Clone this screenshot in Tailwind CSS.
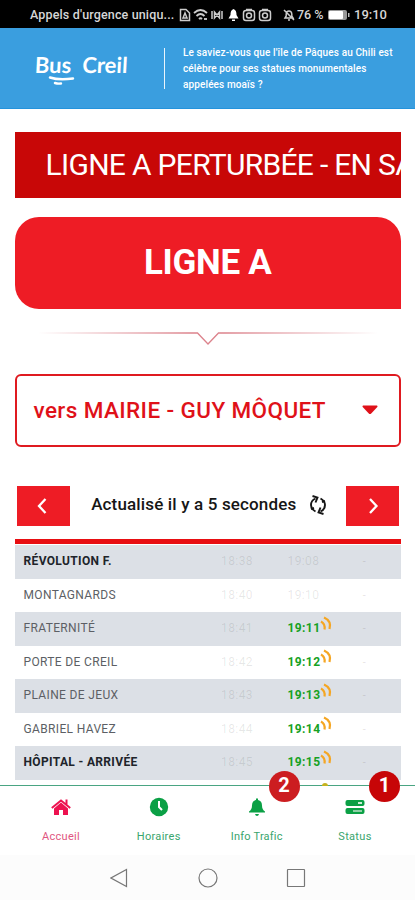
<!DOCTYPE html>
<html lang="fr">
<head>
    <meta charset="UTF-8">
    <meta name="viewport" content="width=device-width, initial-scale=1.0">
    <title>Bus Creil</title>
    <script src="https://cdn.jsdelivr.net/npm/@tailwindcss/browser@4"></script>
</head>
<body class="bg-white font-[Roboto,sans-serif] overflow-hidden">
    <svg class="hidden">
        <symbol id="live" viewBox="0 0 14 16">
            <path d="M1 5.500Q5.500 8 4.500 13.500M4 1.500Q11.800 5 9.500 13" fill="none" stroke="#f5a623" stroke-width="2.200"/>
        </symbol>
        <symbol id="camera" viewBox="0 0 14 14">
            <rect x="1.500" y="2.500" width="11" height="10" rx="2.500" fill="none" stroke="#ccc" stroke-width="1.500"/>
            <path d="M4 1.500h6" stroke="#ccc" stroke-width="1.500"/>
            <circle cx="7" cy="7.500" r="2.500" fill="none" stroke="#ccc" stroke-width="1.500"/>
        </symbol>
    </svg>

    <div class="h-screen flex flex-col">
        <!-- Status bar -->
        <div class="h-7 shrink-0 bg-black text-[#d6d6d6] flex items-center pl-[30px] pt-[2px] text-[12.5px] font-medium whitespace-nowrap">
            <span class="w-[146px] tracking-[0.15px]">Appels d'urgence uniqu...</span>
            <svg class="ml-[3px] w-3 h-[14px]" viewBox="0 0 12 14" fill="none" stroke="#ccc" stroke-width="1.500"><path d="M1.500 1.500h5.500l3.500 3.500v7.500h-9z"/><path d="M4 10l2-5 2 5z"/></svg>
            <svg class="ml-[2px] w-[15px] h-[14px]" viewBox="0 0 15 14" fill="none" stroke="#ccc" stroke-width="1.800"><path d="M1 5Q7.500-1 14 5M3.500 8Q7.500 4 11.500 8M6 11q1.500-1.500 3 0"/><path d="M11 11h3"/></svg>
            <svg class="ml-[2px] w-[14px] h-3" viewBox="0 0 14 12" fill="none" stroke="#ccc" stroke-width="1.500"><path d="M2 2v8M12 2v8M4.500 3v6l5-6v6z"/></svg>
            <svg class="ml-[4px] w-[11px] h-3" viewBox="0 0 11 12" fill="#fff"><path d="M5.500 0C3 1 2.500 3 2.500 6L.5 9.500h10L8.500 6C8.500 3 8 1 5.500 0zM4 10.500h3v1.500H4z"/></svg>
            <svg class="ml-[3px] w-[14px] h-[14px]"><use href="#camera"/></svg>
            <svg class="ml-[2px] w-[14px] h-[14px]"><use href="#camera"/></svg>
            <svg class="ml-[11px] w-3 h-3" viewBox="0 0 12 12" fill="none" stroke="#ccc" stroke-width="1.500"><path d="M2 9h8L8.800 7V5Q8.500 2 6 2T3.200 5v2zM5 11h2M1 1l10 10"/></svg>
            <span class="ml-[2px] w-[31px] text-[12.500px]">76 %</span>
            <svg class="w-[22px] h-3" viewBox="0 0 22 12"><rect x="0" y="1" width="19" height="10" rx="2" fill="#999"/><rect x="1" y="2" width="14" height="8" rx="1" fill="#fff"/><path d="M20 4h1.500v4H20z" fill="#bbb"/></svg>
            <span class="ml-[4px] text-[13px]">19:10</span>
        </div>

        <!-- Header -->
        <header class="h-[81px] shrink-0 bg-[#3a9edf] border-b border-[#2493dc] flex text-white">
            <div class="w-[164px] pl-[35px] pt-[23px] font-[Lato,sans-serif] relative">
                <p class="text-[22px] leading-7 font-bold whitespace-nowrap -skew-x-3"><span>Bus</span><span class="ml-[11px]">Creil</span></p>
                <svg class="absolute left-12 top-[48px] w-7 h-3" viewBox="0 0 28 12" fill="none" stroke="#fff" stroke-width="2.400" stroke-linecap="round"><path d="M2 1.500q9 3 23 1M7 7q3 1 6 .5"/></svg>
            </div>
            <div class="w-px h-[41px] mt-5 bg-white/90"></div>
            <p class="pl-[18px] pt-[17px] text-[10px] leading-[15.8px] font-medium tracking-[0.12px] whitespace-nowrap">Le saviez-vous que l'île de Pâques au Chili est<br>célèbre pour ses statues monumentales<br>appelées moaïs ?</p>
        </header>

        <!-- Line -->
        <main class="flex-1 min-h-0 overflow-hidden pl-[14.5px] pr-[14px] pt-[23px]">
            <div class="h-[66px] bg-[#c80707] text-white text-[30px] tracking-[-0.7px] whitespace-nowrap overflow-hidden flex items-center pl-[31px] pb-px">
                <span>LIGNE A PERTURBÉE - EN SA</span>
            </div>
            <div class="mt-[19px] h-[92px] rounded-[24px] rounded-br-none bg-[#ee1c25] text-white text-[35px] tracking-[-0.3px] font-bold flex items-center justify-center">LIGNE A</div>
            <svg class="block mx-auto mt-[22px] w-[340px] h-4" viewBox="0 0 340 16">
                <defs>
                    <linearGradient id="fade" gradientUnits="userSpaceOnUse" x1="0" y1="0" x2="340" y2="0">
                        <stop offset="0" stop-color="#c9404e" stop-opacity="0"/>
                        <stop offset=".45" stop-color="#c9404e" stop-opacity=".65"/>
                        <stop offset=".55" stop-color="#c9404e" stop-opacity=".65"/>
                        <stop offset="1" stop-color="#c9404e" stop-opacity="0"/>
                    </linearGradient>
                </defs>
                <path d="M0 2h159.500l10.500 11 10.500-11H340" fill="none" stroke="url(#fade)" stroke-width="1.300"/>
            </svg>

            <div class="mt-[27px] h-[73px] border-2 border-[#df1a20] rounded-md text-[#df1119] text-[22.500px] tracking-[0.4px] font-medium flex items-center justify-between pl-[17px] pr-[21px]">
                <span class="whitespace-nowrap">vers MAIRIE - GUY MÔQUET</span>
                <svg class="w-4 h-[10px] -mt-[2px]" viewBox="0 0 16 10" fill="#df1119"><path d="M1 .5h14q1 .5.300 1.500L9.200 8.500q-1.200 1-2.400 0L.7 2Q0 1 1 .5z"/></svg>
            </div>

            <div class="mt-[39px] h-10 flex justify-between items-center px-[2px] text-[#161616]">
                <div class="w-[53px] h-10 bg-[#ee1c25] flex items-center justify-center">
                    <svg class="w-3 h-4 -ml-[3px]" viewBox="0 0 12 16" fill="none" stroke="#fff" stroke-width="2.300"><path d="M9.500 1L3 8l6.500 7"/></svg>
                </div>
                <div class="flex items-center whitespace-nowrap pb-[3px] pl-[4px]">
                    <span class="text-[17px] font-medium tracking-[0.15px]">Actualisé il y a 5 secondes</span>
                    <svg class="ml-[12px] w-5 h-[22px]" viewBox="0 0 20 22" fill="none" stroke="currentColor" stroke-width="1.900">
                        <path d="M7.500 17.500Q3 15 3 11q0-4.500 4.500-6.500M12.500 4.500Q17 7 17 11q0 4.500-4.500 6.500"/>
                        <path d="M4.500 2l5 1.500-2 5M15.500 20l-5-1.500 2-5M14 8l3-1M6 14l-3 1"/>
                    </svg>
                </div>
                <div class="w-[53px] h-10 bg-[#ee1c25] flex items-center justify-center">
                    <svg class="w-3 h-4" viewBox="0 0 12 16" fill="none" stroke="#fff" stroke-width="2.300"><path d="M3 1l6.500 7L3 15"/></svg>
                </div>
            </div>

            <!-- Timetable -->
            <div id="stops" class="mt-[13px] border-t-[5px] border-[#e80e12] pt-px text-[12px]"></div>
        </main>

        <!-- Tabs -->
        <nav class="relative z-10 h-[70px] shrink-0 border-t border-[#4aa582] bg-white grid grid-cols-[112px_1fr_1fr_112px] text-[11px] text-[#3aa56d] pt-[11px]">
            <div class="flex flex-col items-center pl-[10px] gap-[13px] text-[#df5581]">
                <svg class="w-5 h-5" viewBox="0 0 20 20" fill="#ed1250"><path d="M10 5.500l7 6V18h-5v-5H8v5H3v-6.500z"/><path d="M.8 11L10 3.500l9.200 7.500M15.500 2.500V8" fill="none" stroke="#ed1250" stroke-width="2"/></svg>
                <span class="leading-[14px] tracking-[0.3px]">Accueil</span>
            </div>
            <div class="flex flex-col items-center gap-[13px] pr-[2px]">
                <svg class="w-5 h-5" viewBox="0 0 20 20"><circle cx="10" cy="10" r="9.200" fill="#0ba045"/><path d="M10 4v6l3 3" fill="none" stroke="#fff" stroke-width="2"/></svg>
                <span class="leading-[14px] tracking-[0.3px]">Horaires</span>
            </div>
            <div class="relative flex flex-col items-center gap-[13px] pl-[3px]">
                <svg class="w-5 h-5" viewBox="0 0 20 20" fill="#0ba045"><path d="M9 1.500h2v1.400q4 .8 4 5.600 0 4 3 6v1H2v-1q3-2 3-6 0-4.800 4-5.600zM8 17h4q-.5 2-2 2t-2-2z"/></svg>
                <span class="leading-[14px] tracking-[0.2px]">Info Trafic</span>
                <span class="absolute left-[61px] -top-[26px] size-[31px] rounded-full bg-[#cc1d20] text-white text-[20px] font-bold flex items-center justify-center pb-[3px]">2</span>
            </div>
            <div class="relative flex flex-col items-center pr-[8px] gap-[13px]">
                <svg class="w-5 h-5" viewBox="0 0 20 20"><rect x=".5" y="3" width="19" height="6" rx="2" fill="#0ba045"/><rect x=".5" y="11" width="19" height="6" rx="2" fill="#0ba045"/><path d="M13 6h4" stroke="#fff" stroke-width="1.600"/><path d="M8 14h9" stroke="#8dcfa5" stroke-width="2"/></svg>
                <span class="leading-[14px] tracking-[0.3px]">Status</span>
                <span class="absolute left-[66px] -top-[26px] size-[31px] rounded-full bg-[#c70507] text-white text-[20px] font-bold flex items-center justify-center pb-[3px]">1</span>
            </div>
            <!-- live marker of the next row, just showing over the border -->
            <span class="absolute left-[322px] -top-[3px] w-[6px] h-[3px] rounded-t-full bg-[#c5b31f]"></span>
        </nav>

        <!-- System buttons -->
        <div class="h-[45px] shrink-0 bg-[#fcfcfc] flex justify-center gap-[68px] items-center pt-px">
            <svg class="w-5 h-5" viewBox="0 0 20 20" fill="none" stroke="#777" stroke-width="1.200"><path d="M16.500 1.500v17L1 10z"/></svg>
            <svg class="w-5 h-5" viewBox="0 0 20 20" fill="none" stroke="#777" stroke-width="1.200"><circle cx="10" cy="10" r="9"/></svg>
            <svg class="w-5 h-5" viewBox="0 0 20 20" fill="none" stroke="#777" stroke-width="1.200"><rect x="1.500" y="1.500" width="17" height="17" rx=".5"/></svg>
        </div>
    </div>

    <script>
        const stops = [
            ['RÉVOLUTION F.', '18:38', '19:08', false, true],
            ['MONTAGNARDS', '18:40', '19:10', false, false],
            ['FRATERNITÉ', '18:41', '19:11', true, false],
            ['PORTE DE CREIL', '18:42', '19:12', true, false],
            ['PLAINE DE JEUX', '18:43', '19:13', true, false],
            ['GABRIEL HAVEZ', '18:44', '19:14', true, false],
            ['HÔPITAL - ARRIVÉE', '18:45', '19:15', true, true]
        ];

        document.getElementById('stops').innerHTML = stops.map(([name, past, next, live, main], i) => `
            <div class="h-[33.5px] grid grid-cols-[189px_67px_83px_1fr] items-center whitespace-nowrap pb-px ${i % 2 ? '' : 'bg-[#dce0e6]'}">
                <span class="pl-[9px] tracking-[0.35px] ${main ? 'font-bold text-[#20242a]' : 'text-[#5c5f65]'}">${name}</span>
                <span class="text-center tracking-[0.4px] text-black/10">${past}</span>
                <span class="flex items-center pl-[17px] tracking-[0.4px] ${live ? 'font-bold text-[#16a123]' : 'text-black/10'}">
                    <span>${next}</span>
                    ${live ? '<svg class="w-[14px] h-4 -mt-[9px]"><use href="#live"/></svg>' : ''}
                </span>
                <span class="pl-[9px] text-black/10">-</span>
            </div>`).join('');
    </script>
</body>
</html>
